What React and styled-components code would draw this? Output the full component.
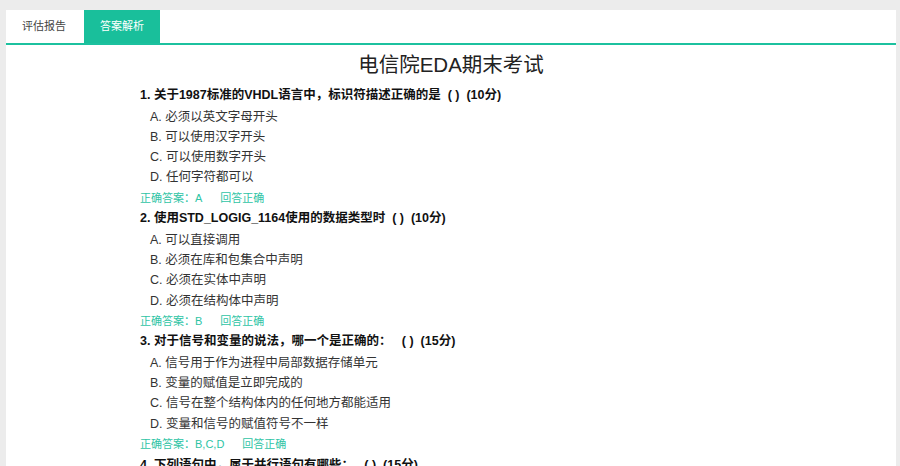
import styled, { createGlobalStyle } from 'styled-components';
import { useState } from 'react';

const GlobalStyle = createGlobalStyle`
  body {
    margin: 0;
    background: #ececec;
    font-family: "Liberation Sans", "Noto Sans CJK SC", sans-serif;
    color: #333;
  }
`;

const questions = [
  {
    title: '1. 关于1987标准的VHDL语言中，标识符描述正确的是  ( )  (10分)',
    options: ['必须以英文字母开头', '可以使用汉字开头', '可以使用数字开头', '任何字符都可以'],
    answer: 'A',
  },
  {
    title: '2. 使用STD_LOGIG_1164使用的数据类型时  ( )  (10分)',
    options: ['可以直接调用', '必须在库和包集合中声明', '必须在实体中声明', '必须在结构体中声明'],
    answer: 'B',
  },
  {
    title: '3. 对于信号和变量的说法，哪一个是正确的：   ( )  (15分)',
    options: ['信号用于作为进程中局部数据存储单元', '变量的赋值是立即完成的', '信号在整个结构体内的任何地方都能适用', '变量和信号的赋值符号不一样'],
    answer: 'B,C,D',
  },
  {
    title: '4. 下列语句中，属于并行语句有哪些：   ( )  (15分)',
    options: ['进程语句', 'CASE语句', '元件例化语句', 'WHEN...ELSE...语句'],
    answer: 'A,C,D',
  },
];

const letters = ['A', 'B', 'C', 'D'];

const App = () => {
  const [tab, setTab] = useState(1);

  return (
    <>
      <GlobalStyle />
      <Page>
        <Panel>
          <TabBar>
            <Tab $active={tab === 0} onClick={() => setTab(0)}>评估报告</Tab>
            <Tab $active={tab === 1} onClick={() => setTab(1)}>答案解析</Tab>
          </TabBar>
          <Title>电信院EDA期末考试</Title>
          <QuestionList>
            {questions.map((q) => (
              <Question key={q.title}>
                <QuestionTitle>{q.title}</QuestionTitle>
                {q.options.map((opt, i) => (
                  <Option key={opt}>{letters[i]}. {opt}</Option>
                ))}
                <Answer>
                  <span>正确答案：{q.answer}</span>
                  <span>回答正确</span>
                </Answer>
              </Question>
            ))}
          </QuestionList>
        </Panel>
      </Page>
    </>
  );
};

const Page = styled.div`
  padding: 10px 4px 0 6px;
`;

const Panel = styled.div`
  background: #fff;
  min-height: 456px;
`;

const TabBar = styled.div`
  display: flex;
  gap: 2px;
  border-bottom: 2px solid #1cc19f;
`;

const Tab = styled.div`
  height: 33px;
  line-height: 33px;
  padding: 0 16px;
  font-size: 11px;
  cursor: pointer;
  background: ${(p) => (p.$active ? '#19bf9b' : '#fff')};
  color: ${(p) => (p.$active ? '#fff' : '#444')};
`;

const Title = styled.h1`
  margin: 8px 0 8px;
  font-size: 20.5px;
  line-height: 24px;
  font-weight: normal;
  text-align: center;
  color: #222;
`;

const QuestionList = styled.div`
  padding-left: 134px;
`;

const Question = styled.div`
  display: flex;
  flex-direction: column;
`;

const QuestionTitle = styled.div`
  font-size: 12.5px;
  font-weight: bold;
  line-height: 21.5px;
  color: #111;
  white-space: pre;
`;

const Option = styled.div`
  padding-left: 10px;
  font-size: 12.5px;
  line-height: 20.3px;
  color: #333;
`;

const Answer = styled.div`
  display: flex;
  gap: 18px;
  font-size: 11px;
  line-height: 20.5px;
  color: #2ec4a5;
`;

export default App;
